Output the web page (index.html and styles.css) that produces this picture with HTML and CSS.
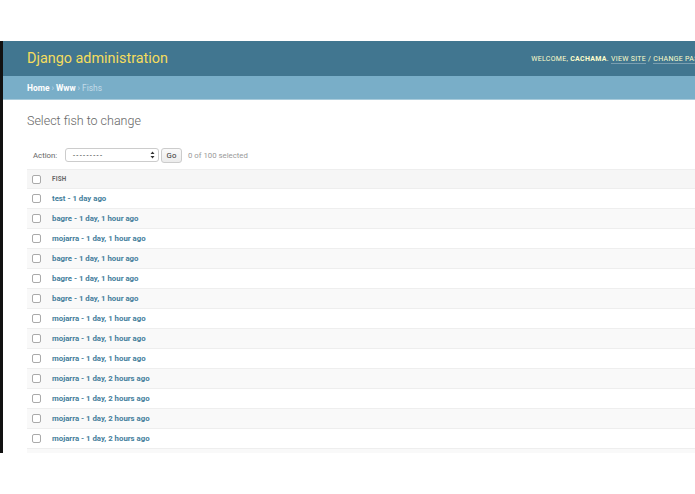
FILE: index.html
```html
<!DOCTYPE html>
<html>
<head>
<meta charset="utf-8">
<link rel="stylesheet" href="styles.css">
</head>
<body>
<div class="frame">
  <div class="header">
    <div class="branding">Django administration</div>
    <div class="user-tools">WELCOME, <strong>CACHAMA</strong>. <span class="ul">VIEW SITE</span> / <span class="ul">CHANGE PASSWORD</span> / <span class="ul">LOG OUT</span></div>
  </div>
  <div class="breadcrumbs"><span class="bc">Home</span> › <span class="bc">Www</span> › <span class="cur">Fishs</span></div>
  <div class="content">
    <h1>Select fish to change</h1>
    <div class="actions">
      <span class="lbl">Action:</span>
      <span class="select"><span class="dashes">---------</span><span class="arrows"><svg width="5" height="8" viewBox="0 0 5 8"><path d="M0.5 3 L2.5 0.5 L4.5 3 Z M0.5 5 L2.5 7.5 L4.5 5 Z" fill="#333"/></svg></span></span>
      <span class="go">Go</span>
      <span class="count">0 of 100 selected</span>
    </div>
    <div class="table">
      <div class="row head"><span class="cb"></span><span class="col">FISH</span></div>
      <div class="row"><span class="cb"></span><span class="link">test - 1 day ago</span></div>
      <div class="row"><span class="cb"></span><span class="link">bagre - 1 day, 1 hour ago</span></div>
      <div class="row"><span class="cb"></span><span class="link">mojarra - 1 day, 1 hour ago</span></div>
      <div class="row"><span class="cb"></span><span class="link">bagre - 1 day, 1 hour ago</span></div>
      <div class="row"><span class="cb"></span><span class="link">bagre - 1 day, 1 hour ago</span></div>
      <div class="row"><span class="cb"></span><span class="link">bagre - 1 day, 1 hour ago</span></div>
      <div class="row"><span class="cb"></span><span class="link">mojarra - 1 day, 1 hour ago</span></div>
      <div class="row"><span class="cb"></span><span class="link">mojarra - 1 day, 1 hour ago</span></div>
      <div class="row"><span class="cb"></span><span class="link">mojarra - 1 day, 1 hour ago</span></div>
      <div class="row"><span class="cb"></span><span class="link">mojarra - 1 day, 2 hours ago</span></div>
      <div class="row"><span class="cb"></span><span class="link">mojarra - 1 day, 2 hours ago</span></div>
      <div class="row"><span class="cb"></span><span class="link">mojarra - 1 day, 2 hours ago</span></div>
      <div class="row"><span class="cb"></span><span class="link">mojarra - 1 day, 2 hours ago</span></div>
      <div class="row"><span class="cb"></span><span class="link">mojarra - 1 day, 2 hours ago</span></div>
    </div>
  </div>
</div>
</body>
</html>
```
FILE: styles.css
```css
html, body {
  margin: 0;
  padding: 0;
  background: #fff;
  overflow: hidden;
  width: 695px;
  height: 494px;
}
body {
  font-family: Roboto, "Liberation Sans", sans-serif;
  color: #333;
}
.frame {
  margin-top: 41px;
  width: 786px;
  height: 412px;
  border-left: 3px solid #111;
  overflow: hidden;
  box-sizing: border-box;
}
.header {
  height: 35px;
  background: #417690;
  display: flex;
  align-items: center;
  padding: 0 24px;
}
.branding {
  color: #f5dd5d;
  font-size: 14.4px;
  font-weight: 400;
}
.user-tools {
  margin-left: auto;
  color: #ffc;
  font-size: 7px;
  letter-spacing: 0.3px;
  white-space: nowrap;
}
.user-tools strong { font-weight: 700; }
.user-tools .ul { border-bottom: 1px solid rgba(255,255,255,0.3); }
.breadcrumbs {
  height: 23px;
  background: #79aec8;
  border-bottom: 1px solid #a9cbdb;
  display: flex;
  align-items: center;
  padding: 0 24px;
  color: #c4dce8;
  font-size: 8.4px;
  gap: 2px;
}
.breadcrumbs .bc { color: #fff; font-weight: 700; }
.breadcrumbs .cur { color: #c4dce8; }
.content {
  padding: 11px 0 0 24px;
}
h1 {
  margin: 0;
  font-size: 12.5px;
  font-weight: 300;
  color: #666;
  height: 20px;
  line-height: 20px;
}
.actions {
  margin-top: 16px;
  height: 16px;
  display: flex;
  align-items: center;
  padding-left: 6px;
  font-size: 7.8px;
  color: #666;
}
.lbl { width: 32px; }
.select {
  width: 94px;
  height: 14px;
  box-sizing: border-box;
  border: 1px solid #ccc;
  border-radius: 3px;
  display: flex;
  align-items: center;
  padding: 0 3px 0 7px;
  color: #333;
  background: #fff;
}
.dashes { font-size: 7.5px; letter-spacing: 1.3px; }
.arrows { margin-left: auto; display: flex; }
.go {
  margin-left: 2px;
  width: 21px;
  height: 15px;
  box-sizing: border-box;
  border: 1px solid #ccc;
  border-radius: 3px;
  background: linear-gradient(#fafafa, #ececec);
  display: flex;
  align-items: center;
  justify-content: center;
  color: #333;
  font-size: 7.8px;
}
.count { margin-left: 6px; color: #999; }
.table {
  margin-top: 6px;
}
.row {
  height: 20px;
  box-sizing: border-box;
  border-bottom: 1px solid #eee;
  display: flex;
  align-items: center;
  padding-left: 5px;
  font-size: 7.8px;
}
.row:nth-child(odd) { background: #f9f9f9; }
.row.head {
  background: #f6f6f6;
  border-top: 1px solid #eee;
}
.cb {
  width: 7px;
  height: 7px;
  border: 1px solid #aaa;
  border-radius: 2px;
  background: #fff;
  margin-right: 11px;
  flex: none;
}
.col {
  font-size: 6.3px;
  font-weight: 700;
  color: #666;
  letter-spacing: 0.2px;
}
.link {
  color: #447e9b;
  font-weight: 700;
}
```
